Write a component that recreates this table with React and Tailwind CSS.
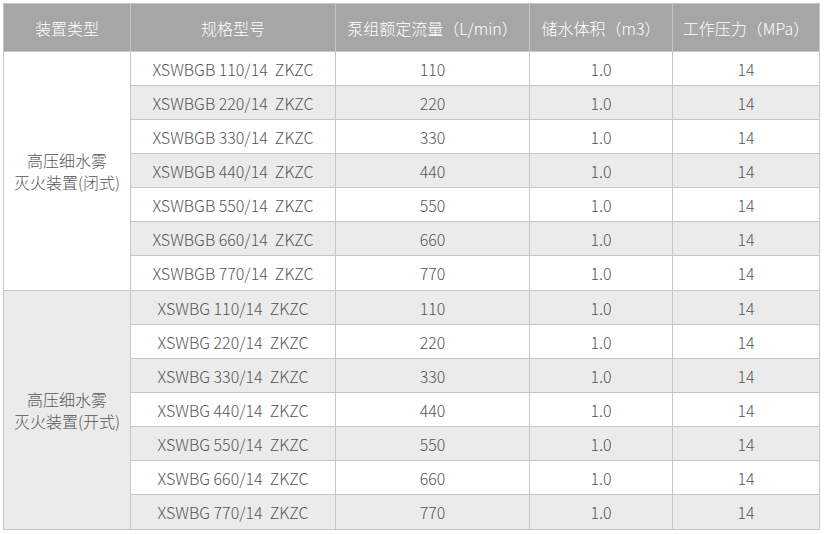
import React from "react";

const GROUPS = [
  { label: ["高压细水雾", "灭火装置(闭式)"], prefix: "XSWBGB" },
  { label: ["高压细水雾", "灭火装置(开式)"], prefix: "XSWBG" },
];

const FLOWS = ["110", "220", "330", "440", "550", "660", "770"];

const cell = "border border-[#c6c6c6] text-center align-middle";

export default function App() {
  let idx = 0;
  return (
    <div className="w-[826px] h-[534px] bg-white pt-[3px] pl-[3px]" style={{ fontFamily: '"Noto Sans CJK SC", "Noto Sans", sans-serif' }}>
      <table className="w-[816px] border-collapse table-fixed text-[16px] font-light text-[#555555]">
        <colgroup>
          <col className="w-[127px]" />
          <col className="w-[205px]" />
          <col className="w-[194px]" />
          <col className="w-[143px]" />
          <col className="w-[147px]" />
        </colgroup>
        <thead>
          <tr className="h-[48px] bg-[#a6a6a6] text-white">
            <th className={`${cell} font-light`}>装置类型</th>
            <th className={`${cell} font-light`}>规格型号</th>
            <th className={`${cell} font-light`}>泵组额定流量（L/min）</th>
            <th className={`${cell} font-light`}>储水体积（m3）</th>
            <th className={`${cell} font-light`}>工作压力（MPa）</th>
          </tr>
        </thead>
        <tbody>
          {GROUPS.map((g, gi) =>
            FLOWS.map((f, i) => {
              const striped = idx++ % 2 === 1;
              return (
                <tr key={g.prefix + f} className={`${i === 6 ? "h-[35px]" : "h-[34px]"} ${striped ? "bg-[#ebebeb]" : "bg-white"}`}>
                  {i === 0 && (
                    <td rowSpan={7} className={`${cell} leading-[22px] ${gi === 1 ? "bg-[#ebebeb]" : "bg-white"}`}>
                      <div>{g.label[0]}</div>
                      <div>{g.label[1]}</div>
                    </td>
                  )}
                  <td className={`${cell} whitespace-pre`}>{`${g.prefix} ${f}/14  ZKZC`}</td>
                  <td className={cell}>{f}</td>
                  <td className={cell}>1.0</td>
                  <td className={cell}>14</td>
                </tr>
              );
            })
          )}
        </tbody>
      </table>
    </div>
  );
}
